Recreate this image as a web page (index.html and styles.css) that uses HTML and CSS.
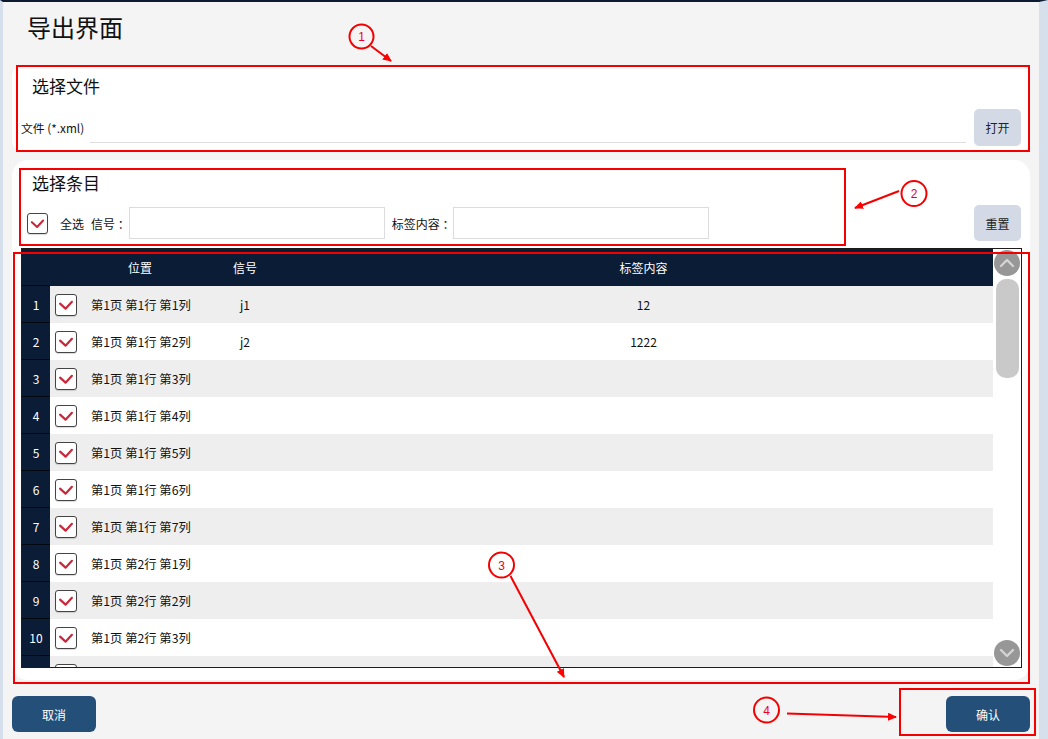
FILE: index.html
```html
<!DOCTYPE html>
<html lang="zh">
<head>
<meta charset="utf-8">
<title>导出界面</title>
<link rel="stylesheet" href="styles.css">
</head>
<body>
<div id="page">
  <h1 class="title">导出界面</h1>

  <!-- file picker -->
  <div class="card file-card">
    <h2 class="card-title">选择文件</h2>
    <div class="file-row">
      <span class="file-label">文件 (*.xml)</span>
      <input class="file-input" type="text">
      <button class="btn-light">打开</button>
    </div>
  </div>

  <!-- items -->
  <div class="card item-card">
    <h2 class="card-title">选择条目</h2>
    <div class="filter-row">
      <span class="check"><svg viewBox="0 0 22 22"><polyline points="4.5,9.5 10.5,15 17.5,7.5"/></svg></span>
      <span class="lbl all">全选</span>
      <span class="lbl sig">信号 ：</span>
      <input class="filter-input" type="text">
      <span class="lbl sig">标签内容 ：</span>
      <input class="filter-input" type="text">
      <button class="btn-light reset">重置</button>
    </div>

    <div class="table">
      <div class="grid">
        <div class="row head"><div class="num"></div><div></div><div class="c-pos">位置</div><div class="c-sig">信号</div><div class="c-tag">标签内容</div></div>
        <div class="row"><div class="num">1</div><div class="c-chk"><span class="check"><svg viewBox="0 0 22 22"><polyline points="4.5,9.5 10.5,15 17.5,7.5"/></svg></span></div><div class="c-pos">第1页 第1行 第1列</div><div class="c-sig">j1</div><div class="c-tag">12</div></div>
        <div class="row"><div class="num">2</div><div class="c-chk"><span class="check"><svg viewBox="0 0 22 22"><polyline points="4.5,9.5 10.5,15 17.5,7.5"/></svg></span></div><div class="c-pos">第1页 第1行 第2列</div><div class="c-sig">j2</div><div class="c-tag">1222</div></div>
        <div class="row"><div class="num">3</div><div class="c-chk"><span class="check"><svg viewBox="0 0 22 22"><polyline points="4.5,9.5 10.5,15 17.5,7.5"/></svg></span></div><div class="c-pos">第1页 第1行 第3列</div><div class="c-sig"></div><div class="c-tag"></div></div>
        <div class="row"><div class="num">4</div><div class="c-chk"><span class="check"><svg viewBox="0 0 22 22"><polyline points="4.5,9.5 10.5,15 17.5,7.5"/></svg></span></div><div class="c-pos">第1页 第1行 第4列</div><div class="c-sig"></div><div class="c-tag"></div></div>
        <div class="row"><div class="num">5</div><div class="c-chk"><span class="check"><svg viewBox="0 0 22 22"><polyline points="4.5,9.5 10.5,15 17.5,7.5"/></svg></span></div><div class="c-pos">第1页 第1行 第5列</div><div class="c-sig"></div><div class="c-tag"></div></div>
        <div class="row"><div class="num">6</div><div class="c-chk"><span class="check"><svg viewBox="0 0 22 22"><polyline points="4.5,9.5 10.5,15 17.5,7.5"/></svg></span></div><div class="c-pos">第1页 第1行 第6列</div><div class="c-sig"></div><div class="c-tag"></div></div>
        <div class="row"><div class="num">7</div><div class="c-chk"><span class="check"><svg viewBox="0 0 22 22"><polyline points="4.5,9.5 10.5,15 17.5,7.5"/></svg></span></div><div class="c-pos">第1页 第1行 第7列</div><div class="c-sig"></div><div class="c-tag"></div></div>
        <div class="row"><div class="num">8</div><div class="c-chk"><span class="check"><svg viewBox="0 0 22 22"><polyline points="4.5,9.5 10.5,15 17.5,7.5"/></svg></span></div><div class="c-pos">第1页 第2行 第1列</div><div class="c-sig"></div><div class="c-tag"></div></div>
        <div class="row"><div class="num">9</div><div class="c-chk"><span class="check"><svg viewBox="0 0 22 22"><polyline points="4.5,9.5 10.5,15 17.5,7.5"/></svg></span></div><div class="c-pos">第1页 第2行 第2列</div><div class="c-sig"></div><div class="c-tag"></div></div>
        <div class="row"><div class="num">10</div><div class="c-chk"><span class="check"><svg viewBox="0 0 22 22"><polyline points="4.5,9.5 10.5,15 17.5,7.5"/></svg></span></div><div class="c-pos">第1页 第2行 第3列</div><div class="c-sig"></div><div class="c-tag"></div></div>
        <!-- next row, only its top shows above the fold -->
        <div class="row"><div class="num"></div><div class="c-chk"><span class="check"><svg viewBox="0 0 22 22"><polyline points="4.5,9.5 10.5,15 17.5,7.5"/></svg></span></div><div class="c-pos"></div><div class="c-sig"></div><div class="c-tag"></div></div>
      </div>
      <div class="scrollbar">
        <span class="sb-btn"><svg viewBox="0 0 26 26"><polyline points="7,16 13,10 19,16"/></svg></span>
        <span class="sb-thumb"></span>
        <span class="sb-btn down"><svg viewBox="0 0 26 26"><polyline points="7,10 13,16 19,10"/></svg></span>
      </div>
    </div>
  </div>

  <div class="actions">
    <button class="btn-dark">取消</button>
    <button class="btn-dark">确认</button>
  </div>
</div>

<!-- red review marks drawn over the screen -->
<svg class="marks" width="1048" height="739" viewBox="0 0 1048 739">
  <defs>
    <marker id="ah" markerWidth="9" markerHeight="8" refX="8" refY="4" orient="auto" markerUnits="userSpaceOnUse">
      <path d="M0,0 L9,4 L0,8 z" fill="#f00"/>
    </marker>
  </defs>
  <rect x="17" y="66" width="1012" height="85"/>
  <rect x="20" y="169" width="825" height="76"/>
  <rect x="14" y="253" width="1015" height="430"/>
  <rect x="900" y="689" width="135" height="46"/>

  <circle cx="361.5" cy="36.5" r="12"/>
  <text x="361.5" y="41">1</text>
  <line x1="371" y1="46" x2="391" y2="61" marker-end="url(#ah)"/>

  <circle cx="914" cy="193.5" r="12.5"/>
  <text x="914" y="198">2</text>
  <line x1="899" y1="191" x2="855" y2="208" marker-end="url(#ah)"/>

  <circle cx="501.5" cy="565" r="12.5"/>
  <text x="501.5" y="569.5">3</text>
  <line x1="510.5" y1="576" x2="564" y2="677" marker-end="url(#ah)"/>

  <circle cx="766.5" cy="710" r="12.5"/>
  <text x="766.5" y="714.5">4</text>
  <line x1="787" y1="713.5" x2="896" y2="717" marker-end="url(#ah)"/>
</svg>
</body>
</html>
```

FILE: styles.css
```css
* {
box-sizing: border-box;
}

html, body {
margin: 0;
}

body {
width: 1048px;
height: 739px;
position: relative;
overflow: hidden;
background-color: #f4f4f4;
font-family: "Noto Sans CJK SC", "Noto Sans", sans-serif;
font-size: 12px;
color: #111;
}

#page {
height: 739px;
border-top: 2px solid #0c1a32;
border-left: 3px solid #d6e0ec;
border-right: 9px solid #d6e0ec;
padding: 0 9px;
}

.title {
margin: 0;
padding: 9px 0 0 15px;
font-size: 24px;
font-weight: normal;
line-height: 32px;
}

.card {
background-color: white;
padding: 0 9px;
}

.card-title {
margin: 0 0 0 11px;
font-size: 17px;
font-weight: normal;
line-height: 24px;
}

/* file card */
.file-card {
margin-top: 22px;
height: 87px;
padding-top: 9px;
border-radius: 12px;
}

.file-row {
display: flex;
align-items: center;
margin-top: 11px;
}

.file-label {
font-size: 11.8px;
}

.file-input {
flex: 1;
height: 30px;
margin: 0 8px 0 6px;
border: 0;
border-bottom: 1px solid #dedede;
background: transparent;
}

.btn-light {
width: 47px;
height: 37px;
border: 0;
border-radius: 5px;
background-color: #d3dae5;
color: #222;
font-family: inherit;
font-size: 12px;
}

/* item card */
.item-card {
margin-top: 8px;
height: 520px;
padding-top: 11px;
border-radius: 16px;
}

.filter-row {
display: flex;
align-items: center;
height: 36px;
margin-top: 10px;
padding-left: 6px;
}

.check {
display: inline-block;
width: 21px;
height: 21px;
border: 1.5px solid #444;
border-radius: 3px;
background-color: white;
box-shadow: 0 1px 1px rgba(0,0,0,0.15);
}

.check svg {
display: block;
width: 100%;
height: 100%;
}

.check polyline {
fill: none;
stroke: #c9283b;
stroke-width: 2.4;
stroke-linecap: round;
stroke-linejoin: round;
}

.lbl.all {
margin-left: 12px;
}

.lbl.sig {
margin-left: 7px;
}

.filter-input {
width: 256px;
height: 32px;
margin-left: -1px;
border: 1px solid #dcdcdc;
background: white;
}

.reset {
height: 36px;
margin-left: auto;
}

/* table */
.table {
display: flex;
height: 420px;
margin-top: 7px;
margin-right: -1px;
border: 1px solid #1c1c1c;
overflow: hidden;
}

.grid {
flex: 1;
overflow: hidden;
}

.row {
display: grid;
grid-template-columns: 28px 34px 112px 98px 1fr;
height: 37px;
background-color: white;
}

.row:nth-child(even) {
background-color: #eeeeee;
}

.row > div {
display: flex;
align-items: center;
}

.row.head {
background-color: #0b1c36;
color: white;
}

.num {
justify-content: center;
background-color: #0b1c36;
color: white;
border-bottom: 1px solid #03080f;
}

.c-chk {
padding-left: 5px;
}

.c-chk .check {
width: 22px;
height: 22px;
}

.c-pos {
padding-left: 7px;
font-size: 12.3px;
}

.head .c-pos {
justify-content: center;
padding-left: 0;
font-size: 12px;
}

.c-sig, .c-tag {
justify-content: center;
}

.scrollbar {
width: 28px;
display: flex;
flex-direction: column;
align-items: center;
padding: 1px 0;
background-color: white;
}

.sb-btn {
width: 26px;
height: 26px;
border-radius: 50%;
background-color: #979797;
}

.sb-btn svg {
display: block;
}

.sb-btn polyline {
fill: none;
stroke: #d4d4d4;
stroke-width: 2.4;
stroke-linecap: round;
stroke-linejoin: round;
}

.sb-btn.down {
margin-top: auto;
}

.sb-thumb {
width: 23px;
height: 99px;
margin-top: 3px;
border-radius: 10px;
background-color: #c9c9c9;
}

/* bottom buttons */
.actions {
display: flex;
justify-content: space-between;
margin-top: 16px;
}

.btn-dark {
width: 84px;
height: 36px;
border: 0;
border-radius: 6px;
background-color: #244f78;
color: white;
font-family: inherit;
font-size: 12px;
}

/* review marks */
.marks {
position: absolute;
top: 0;
left: 0;
pointer-events: none;
}

.marks rect, .marks circle {
fill: none;
stroke: #f40000;
stroke-width: 2;
}

.marks line {
stroke: #f40000;
stroke-width: 2;
}

.marks text {
fill: #e8002a;
font-family: "Liberation Sans", sans-serif;
font-size: 12px;
text-anchor: middle;
}
```
